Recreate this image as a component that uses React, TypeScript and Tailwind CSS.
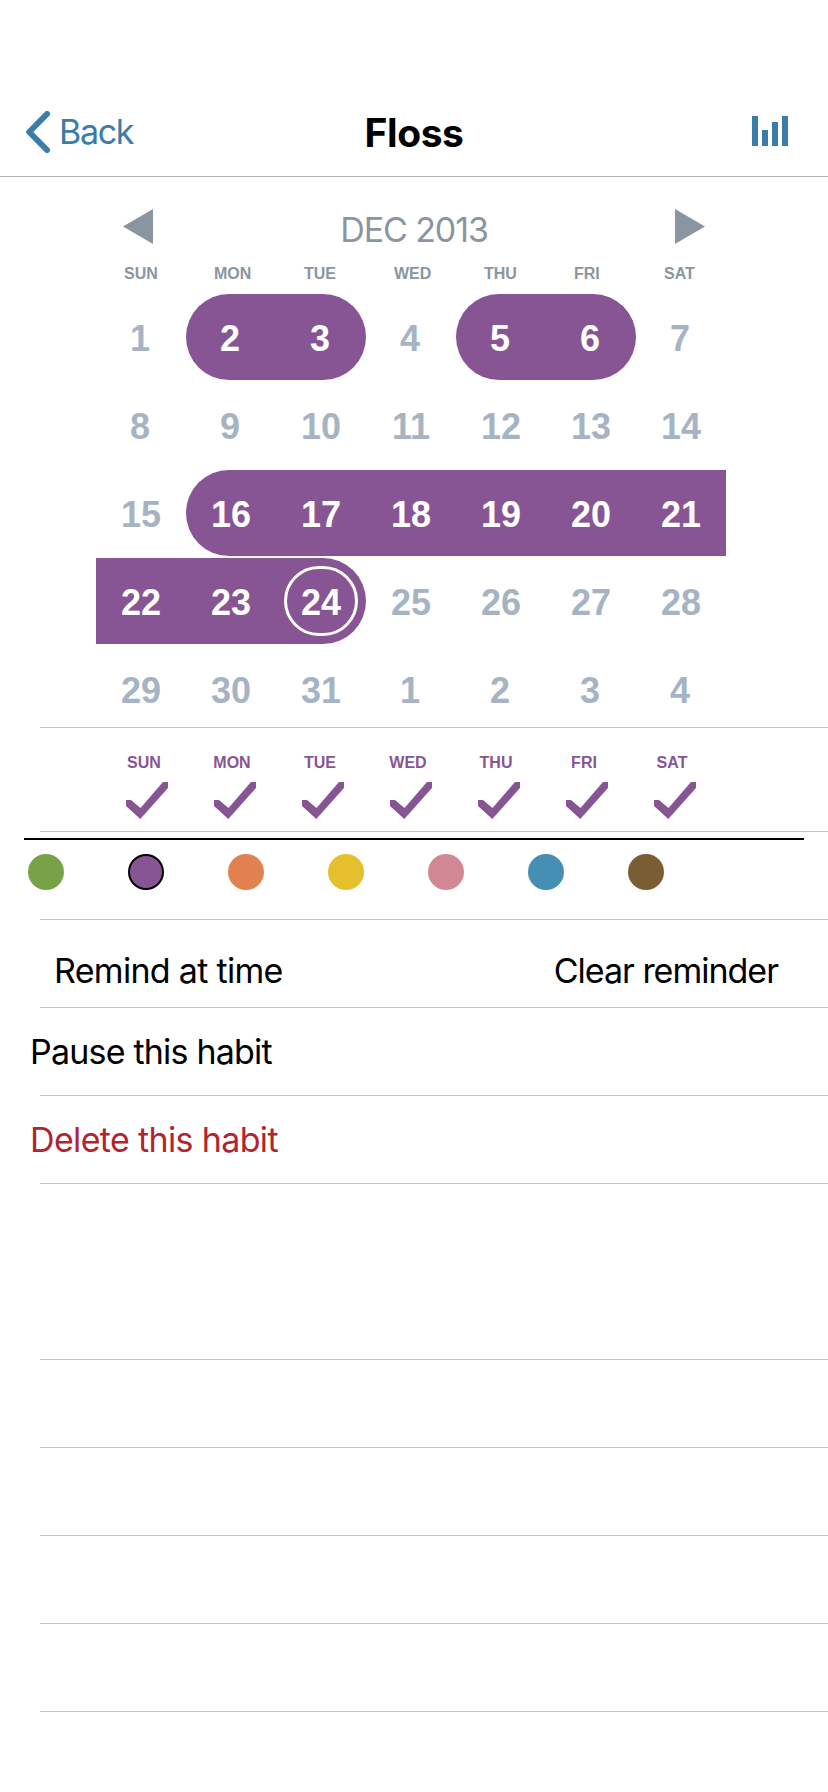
const WEEKDAYS = ["SUN", "MON", "TUE", "WED", "THU", "FRI", "SAT"];

type Mark = "none" | "start" | "middle" | "end";

interface Day {
  n: number;
  mark: Mark;
  today?: boolean;
}

const d = (n: number, mark: Mark = "none", today = false): Day => ({ n, mark, today });

const WEEKS: Day[][] = [
  [d(1), d(2, "start"), d(3, "end"), d(4), d(5, "start"), d(6, "end"), d(7)],
  [d(8), d(9), d(10), d(11), d(12), d(13), d(14)],
  [d(15), d(16, "start"), d(17, "middle"), d(18, "middle"), d(19, "middle"), d(20, "middle"), d(21, "middle")],
  [d(22, "middle"), d(23, "middle"), d(24, "end", true), d(25), d(26), d(27), d(28)],
  [d(29), d(30), d(31), d(1), d(2), d(3), d(4)],
];

const MARK_CLASS: Record<Mark, string> = {
  none: "text-[#a6b3c3]",
  start: "rounded-l-full bg-[#875594] text-white",
  middle: "bg-[#875594] text-white",
  end: "rounded-r-full bg-[#875594] text-white",
};

const COLORS = [
  "bg-[#78a248]",
  "bg-[#875594] border-2 border-black",
  "bg-[#e28150]",
  "bg-[#e6bf2c]",
  "bg-[#d28794]",
  "bg-[#468fb4]",
  "bg-[#7b5d34]",
];

function Header() {
  return (
    <header className="grid h-[177px] grid-cols-3 border-b border-[#b2b2b2] pt-[88px]">
      <button className="flex h-[88px] items-center pl-[26px] text-[#3a7da8]">
        <svg width="25" height="42" viewBox="0 0 25 42" fill="none" className="block">
          <path d="M21 3 L3.2 21 L21 39" stroke="currentColor" strokeWidth="6" strokeLinecap="round" strokeLinejoin="round" />
        </svg>
        <span className="pl-[8px] text-[34px] leading-[40px] tracking-[-1.3px]">Back</span>
      </button>
      <h1 className="flex h-[88px] items-center justify-center pt-[2px] text-[39px] font-bold leading-[46px] tracking-[-0.4px] text-black">
        Floss
      </h1>
      <div className="flex justify-end pr-[40px] pt-[28px]">
        <svg width="36" height="30" viewBox="0 0 36 30" fill="#3a7da8" className="block">
          <rect x="0" y="0" width="6" height="30" />
          <rect x="10" y="14" width="6" height="16" />
          <rect x="20" y="6" width="6" height="24" />
          <rect x="30" y="0" width="6" height="30" />
        </svg>
      </div>
    </header>
  );
}

function Calendar() {
  return (
    <section className="h-[550px] pl-[96px]">
      <div className="flex h-[86px] w-[630px] justify-between pl-[27px] pr-[21px] pt-[32px] text-[#8a95a1]">
        <svg width="30" height="35" viewBox="0 0 30 35" fill="currentColor" className="block">
          <path d="M0 17.5 L30 0 V35 Z" />
        </svg>
        <div className="pt-[1px] text-[34px] leading-[40px] tracking-[-1.1px]">DEC 2013</div>
        <svg width="30" height="35" viewBox="0 0 30 35" fill="currentColor" className="block">
          <path d="M30 17.5 L0 0 V35 Z" />
        </svg>
      </div>
      <div className="grid h-[31px] w-[630px] grid-cols-7 text-[#8a95a1]">
        {WEEKDAYS.map((w) => (
          <div key={w} className="pl-[28px] pt-[1px] font-['Liberation_Sans',sans-serif] text-[16px] font-bold leading-[20px]">
            {w}
          </div>
        ))}
      </div>
      <div className="flex w-[630px] flex-col gap-[2px]">
        {WEEKS.map((week, i) => (
          <div key={i} className="grid h-[86px] grid-cols-7">
            {week.map((day, j) => (
              <div
                key={j}
                className={`relative flex items-center justify-center pt-[3px] font-['Liberation_Sans',sans-serif] text-[36px] font-bold leading-[40px] ${day.n < 10 ? "pr-[2px]" : ""} ${MARK_CLASS[day.mark]}`}
              >
                {day.n}
                {day.today && (
                  <span className="absolute left-[8px] top-[8px] h-[70px] w-[74px] rounded-full border-[3px] border-white" />
                )}
              </div>
            ))}
          </div>
        ))}
      </div>
    </section>
  );
}

function Schedule() {
  return (
    <section className="ml-[40px] h-[105px] border-y border-[#c4c4c6] pl-[60px]">
      <div className="grid w-[616px] grid-cols-7 text-[#875594]">
        {WEEKDAYS.map((w) => (
          <div key={w} className="pt-[25px]">
            <div className="text-center font-['Liberation_Sans',sans-serif] text-[16px] font-bold leading-[20px]">{w}</div>
            <svg width="42" height="37" viewBox="0 0 42 37" fill="currentColor" className="ml-[26px] mt-[9px] block">
              <path d="M0 18 H5 L14.5 26 L37 0 H42 V6 L14.3 37 L0 24 Z" />
            </svg>
          </div>
        ))}
      </div>
    </section>
  );
}

function Palette() {
  return (
    <section className="h-[87px] pt-[6px]">
      <div className="mx-[24px] h-[2px] bg-black" />
      <div className="flex gap-[64px] pl-[28px] pt-[14px]">
        {COLORS.map((c) => (
          <button key={c} className={`h-[36px] w-[36px] rounded-full ${c}`} />
        ))}
      </div>
    </section>
  );
}

function Divider() {
  return <div className="ml-[40px] h-px bg-[#c4c4c6]" />;
}

export default function App() {
  return (
    <main className="h-[1792px] w-[828px] overflow-hidden bg-white font-['Inter',sans-serif] text-black">
      <Header />
      <Calendar />
      <Schedule />
      <Palette />
      <Divider />
      <div className="flex h-[87px] justify-between pl-[54px] pr-[50px] pt-[31px] text-[34px] leading-[40px]">
        <span className="tracking-[-0.7px]">Remind at time</span>
        <span className="tracking-[-1px]">Clear reminder</span>
      </div>
      <Divider />
      <div className="h-[87px] pl-[30px] pt-[24px] text-[34px] leading-[40px] tracking-[-0.8px]">Pause this habit</div>
      <Divider />
      <div className="h-[87px] pl-[30px] pt-[24px] text-[34px] leading-[40px] tracking-[-0.65px] text-[#b12432]">
        Delete this habit
      </div>
      <Divider />
      <div className="h-[175px]" />
      <Divider />
      {[0, 1, 2, 3].map((i) => (
        <div key={i} className="pt-[87px]">
          <Divider />
        </div>
      ))}
    </main>
  );
}
